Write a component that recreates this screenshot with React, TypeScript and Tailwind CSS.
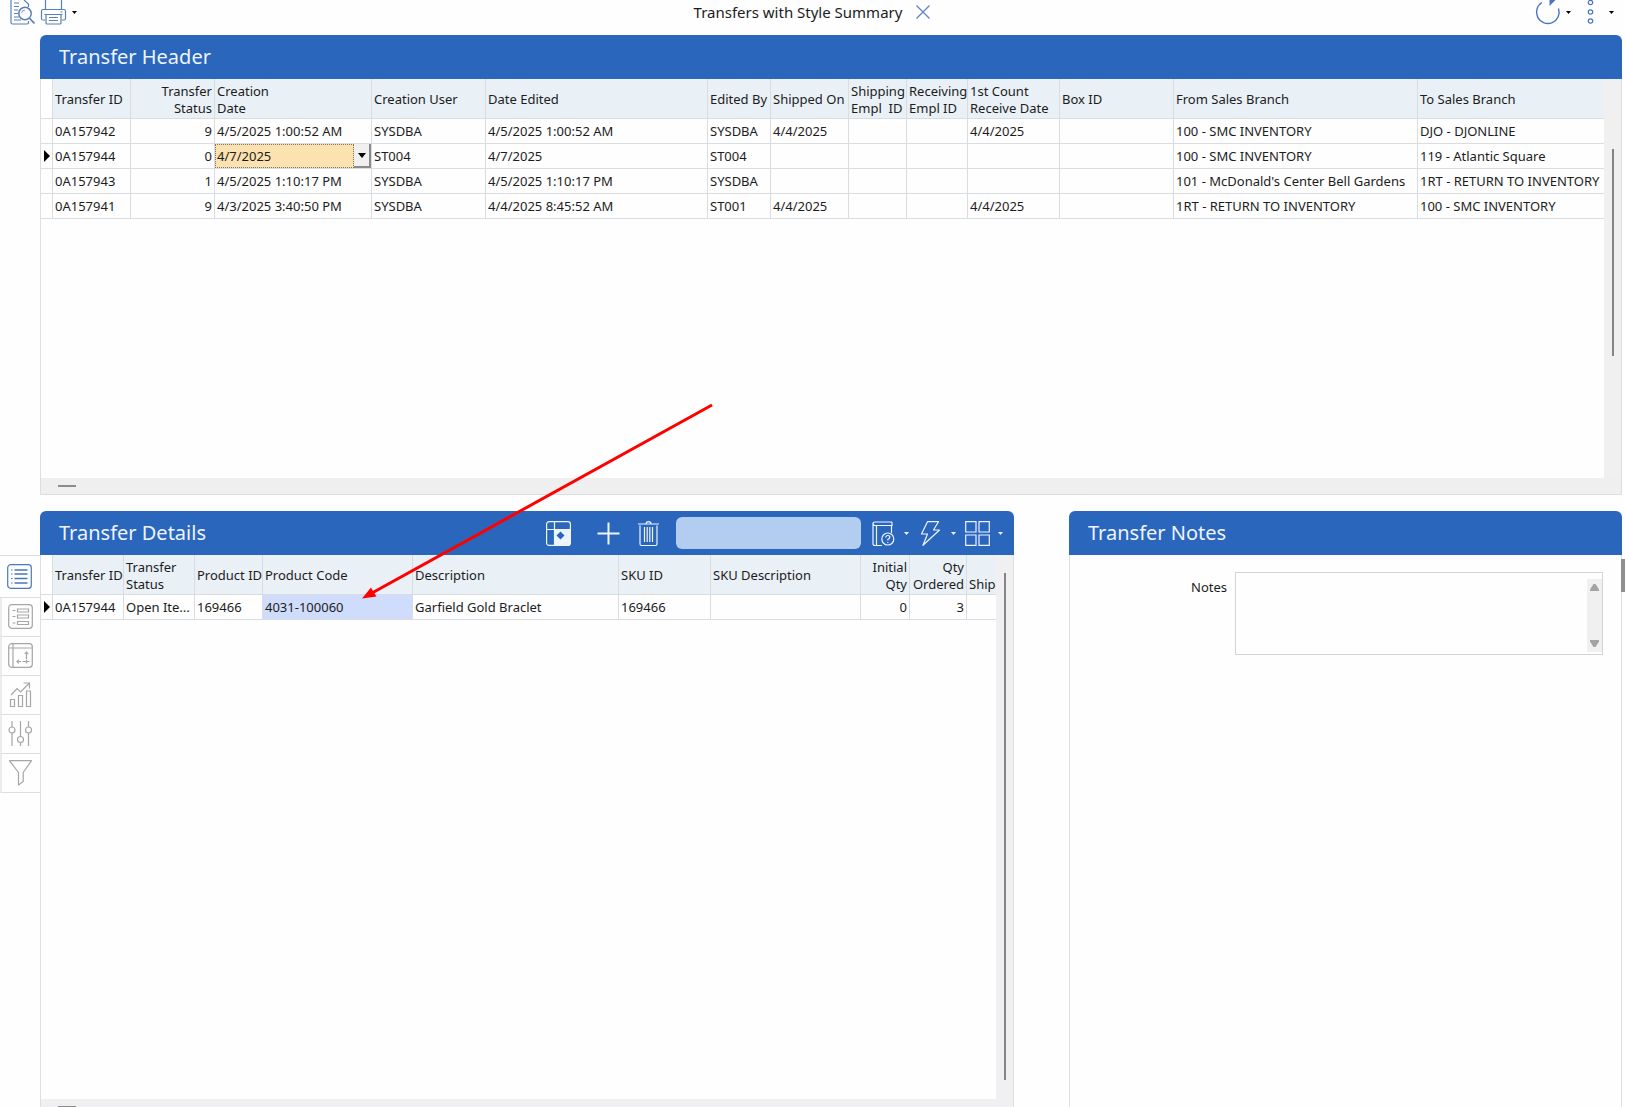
import type { ReactNode } from "react";

interface Column {
  label: ReactNode;
  width?: string;
  right?: boolean;
}

interface TransferRow {
  id: string;
  status: string;
  created: string;
  user: string;
  edited: string;
  editedBy: string;
  shipped: string;
  received: string;
  from: string;
  to: string;
}

const headerColumns: Column[] = [
  { label: "Transfer ID", width: "w-[78px]" },
  { label: <>Transfer<br />Status</>, width: "w-[84px]", right: true },
  { label: <>Creation<br />Date</>, width: "w-[157px]" },
  { label: "Creation User", width: "w-[114px]" },
  { label: "Date Edited", width: "w-[222px]" },
  { label: "Edited By", width: "w-[63px]" },
  { label: "Shipped On", width: "w-[78px]" },
  { label: <>Shipping<br />Empl &nbsp;ID</>, width: "w-[58px]" },
  { label: <>Receiving<br />Empl ID</>, width: "w-[61px]" },
  { label: <>1st Count<br />Receive Date</>, width: "w-[92px]" },
  { label: "Box ID", width: "w-[114px]" },
  { label: "From Sales Branch", width: "w-[244px]" },
  { label: "To Sales Branch" },
];

const detailColumns: Column[] = [
  { label: "Transfer ID", width: "w-[71px]" },
  { label: <>Transfer<br />Status</>, width: "w-[71px]" },
  { label: "Product ID", width: "w-[68px]" },
  { label: "Product Code", width: "w-[150px]" },
  { label: "Description", width: "w-[206px]" },
  { label: "SKU ID", width: "w-[92px]" },
  { label: "SKU Description", width: "w-[150px]" },
  { label: <>Initial<br />Qty</>, width: "w-[49px]", right: true },
  { label: <>Qty<br />Ordered</>, width: "w-[57px]", right: true },
  { label: <><br />Ship</> },
];

const transfers: TransferRow[] = [
  {
    id: "0A157942", status: "9", created: "4/5/2025 1:00:52 AM", user: "SYSDBA", edited: "4/5/2025 1:00:52 AM",
    editedBy: "SYSDBA", shipped: "4/4/2025", received: "4/4/2025", from: "100 - SMC INVENTORY", to: "DJO - DJONLINE",
  },
  {
    id: "0A157944", status: "0", created: "4/7/2025", user: "ST004", edited: "4/7/2025",
    editedBy: "ST004", shipped: "", received: "", from: "100 - SMC INVENTORY", to: "119 - Atlantic Square",
  },
  {
    id: "0A157943", status: "1", created: "4/5/2025 1:10:17 PM", user: "SYSDBA", edited: "4/5/2025 1:10:17 PM",
    editedBy: "SYSDBA", shipped: "", received: "", from: "101 - McDonald's Center Bell Gardens", to: "1RT - RETURN TO INVENTORY",
  },
  {
    id: "0A157941", status: "9", created: "4/3/2025 3:40:50 PM", user: "SYSDBA", edited: "4/4/2025 8:45:52 AM",
    editedBy: "ST001", shipped: "4/4/2025", received: "4/4/2025", from: "1RT - RETURN TO INVENTORY", to: "100 - SMC INVENTORY",
  },
];

const selectedId = "0A157944";

/* ---------- Icons ---------- */

function Icon({ children, className = "" }: { children: ReactNode; className?: string }) {
  return (
    <svg
      viewBox="0 0 25 25"
      className={`h-[25px] w-[25px] shrink-0 overflow-visible ${className}`}
      fill="none"
      stroke="currentColor"
      strokeWidth="1.2"
      aria-hidden="true"
    >
      {children}
    </svg>
  );
}

function Caret({ className = "" }: { className?: string }) {
  return (
    <svg viewBox="0 0 5 3" className={`h-[3px] w-[5px] shrink-0 ${className}`} fill="currentColor" aria-hidden="true">
      <path d="M0 0h5L2.5 3z" />
    </svg>
  );
}

function PreviewIcon() {
  return (
    <Icon>
      <path d="M1 0v22.500q0 1.500 1.500 1.500H17q1.500 0 1.500-1.500V21M14 0l4.500 4V7" />
      <path d="M4 3h5M4 6.500h5M4 10h4M4 13.500h4M4 17h5M4 20h7" />
      <circle cx="15" cy="13.500" r="6.200" strokeWidth="1.500" />
      <path d="M11.500 13q.5-3 3.500-3" strokeWidth=".8" />
      <path d="m19.300 18 5.200 5.500" strokeWidth="1.800" />
    </Icon>
  );
}

function PrinterIcon() {
  return (
    <Icon>
      <path d="M4.500 9.500V0M20.500 9.500V0" />
      <path d="M4 20H2q-1.500 0-1.500-1.500V11q0-1.500 1.500-1.500h21q1.500 0 1.500 1.500v7.500q0 1.500-1.500 1.500h-2" />
      <path d="M3.500 14.500h18M5 14.500V23q0 1 1 1h13q1 0 1-1v-8.500M8 17.500h9M8 20.500h9M19.500 12h2" />
    </Icon>
  );
}

function RefreshIcon() {
  return (
    <Icon>
      <path d="M7 2.500A11.300 11.300 0 1 0 23.500 8.500" strokeWidth="1.400" />
      <path d="M14.500-.5h6.500L14.500 6z" fill="currentColor" stroke="none" />
    </Icon>
  );
}

function DotsIcon() {
  return (
    <Icon>
      <circle cx="12.500" cy="2.500" r="2.200" />
      <circle cx="12.500" cy="12" r="2.200" />
      <circle cx="12.500" cy="21" r="2.200" />
    </Icon>
  );
}

function ListIcon() {
  return (
    <Icon>
      <rect x=".7" y=".7" width="23.600" height="23.600" rx="3" />
      <path d="M7.500 6h13M7.500 10h13M7.500 14.500h13M7.500 19h13" strokeWidth="1.500" />
      <path d="M4 6h1.500M4 10h1.500M4 14.500h1.500M4 19h1.500" />
    </Icon>
  );
}

function FormIcon() {
  return (
    <Icon>
      <rect x=".7" y=".7" width="23.600" height="23.600" rx="3" />
      <path d="M9.500 5h11v3h-11zM9.500 11h11v3h-11zM9.500 17.500h11v3h-11zM4.500 6.500h3M4.500 12.500h3M4.500 19h3" />
    </Icon>
  );
}

function PivotIcon() {
  return (
    <Icon>
      <rect x=".7" y=".7" width="23.600" height="23.600" rx="3" />
      <path d="M1 5h23.500M5 1v23.500" />
      <path d="M18.500 9v7m-1.800-5.200L18.500 9l1.800 1.800M9 18.500h4m-2.200-1.800L9 18.500l1.800 1.800M14.500 18.500h7M18.500 16.500v4" />
    </Icon>
  );
}

function ChartIcon() {
  return (
    <Icon>
      <path d="M2.500 17.500h4v7h-4zM10.500 13.500h4v11h-4zM18.500 9h4v15.500h-4z" />
      <path d="m3 13 6-6.500 3.500 3.500 8.500-8.500M15.500 1h6v5.500" />
    </Icon>
  );
}

function SlidersIcon() {
  return (
    <Icon>
      <path d="M4 0v6M4 12v13M12.500 0v15.500M12.500 21.500V25M20.500 0v6M20.500 12v13" />
      <circle cx="4" cy="9" r="3" />
      <circle cx="12.500" cy="18.500" r="3" />
      <circle cx="20.500" cy="9" r="3" />
    </Icon>
  );
}

function FunnelIcon() {
  return (
    <Icon>
      <path d="M1.500.7h22l-8.300 11.800v9L10.500 25V12.500z" strokeLinejoin="round" />
    </Icon>
  );
}

function LayoutIcon() {
  return (
    <Icon>
      <rect x=".6" y=".6" width="23.800" height="23.800" rx="2.500" />
      <path d="M8.500.6v24M.6 8.500h24" />
      <path d="M8.500 8.500h16V22q0 2.400-2.400 2.400H8.500z" fill="currentColor" stroke="none" />
      <path d="m14.500 10.500 4 4-4 4-4-4z" fill="#2a66bb" stroke="none" />
    </Icon>
  );
}

function PlusIcon() {
  return (
    <Icon>
      <path d="M12.500 1.500v22M1.500 12.500h22" strokeWidth="2" />
    </Icon>
  );
}

function TrashIcon() {
  return (
    <Icon>
      <path d="M2 3h21M10 3q0-2.300 2.500-2.300T15 3M4 4.500V23q0 1.500 1.500 1.500h14Q21 24.500 21 23V4.500" />
      <path d="M8.500 6v15M11.200 6v15M13.800 6v15M16.500 6v15" />
    </Icon>
  );
}

function BookIcon() {
  return (
    <Icon>
      <path d="M21 1H4Q2 1 2 3v19.500Q2 24.500 4 24.500h7M21 1v3.500H4Q2 4.500 2 2.500M20.500 4.500V12M5.500 4.500v20" />
      <circle cx="16.800" cy="18" r="6" />
      <path d="M14.800 16.500q0-2 2-2t2 1.800q0 1.200-2 2.200v1M16.800 21v1" />
    </Icon>
  );
}

function BoltIcon() {
  return (
    <Icon>
      <path d="M9.500.7h11l-5 8.300h6L5 24.300 9.500 13h-6z" strokeLinejoin="round" />
    </Icon>
  );
}

function TilesIcon() {
  return (
    <Icon>
      <path d="M.7.700h10.300V11H.7zM14 .7h10.300V11H14zM.7 14h10.300v10.300H.7zM14 14h10.300v10.300H14z" />
    </Icon>
  );
}

/* ---------- Grid parts ---------- */

function GridHead({ columns }: { columns: Column[] }) {
  return (
    <thead>
      <tr className="h-10">
        <th className="w-3 border-r border-b border-[#d9dce0] bg-white" aria-label="Current row" />
        {columns.map((col, i) => (
          <th
            key={i}
            className={`${col.width ?? ""} ${col.right ? "text-right" : "text-left"} overflow-hidden border-b border-[#d9dce0] bg-[#e9f0f6] px-0.5 pt-0.5 leading-[17px] font-normal whitespace-nowrap ${i < columns.length - 1 ? "border-r" : ""}`}
          >
            {col.label}
          </th>
        ))}
      </tr>
    </thead>
  );
}

function RowMarker({ current }: { current: boolean }) {
  return (
    <td className="border-r border-b border-[#d9dce0]">
      {current && (
        <svg viewBox="0 0 6 12" className="mx-auto h-3 w-1.5" aria-label="Current row">
          <path d="M0 0v12l6-6z" />
        </svg>
      )}
    </td>
  );
}

function Cell({ children, className = "" }: { children?: ReactNode; className?: string }) {
  return (
    <td className={`overflow-hidden border-r border-b border-[#d9dce0] px-0.5 pt-0.5 text-ellipsis whitespace-nowrap last:border-r-0 ${className}`}>
      {children}
    </td>
  );
}

function PanelTitle({ title, children }: { title: string; children?: ReactNode }) {
  return (
    <div className="flex h-11 shrink-0 items-center rounded-t-md bg-[#2a66bb] pr-[11px] pl-[19px] text-[#eef4ff]">
      <h2 className="flex-1 text-xl">{title}</h2>
      {children}
    </div>
  );
}

function ToolButton({ label, caret, children }: { label: string; caret?: boolean; children: ReactNode }) {
  return (
    <button type="button" aria-label={label} className="flex shrink-0 items-center gap-2">
      {children}
      {caret && <Caret />}
    </button>
  );
}

function TopBar() {
  return (
    <header className="grid h-[35px] shrink-0 grid-cols-[1fr_auto_1fr] items-start pr-[11px] pl-2.5">
      <div className="flex items-center gap-[6px] text-[#5b80b4]">
        <ToolButton label="Preview"><PreviewIcon /></ToolButton>
        <button type="button" aria-label="Print" className="flex items-center gap-1.5">
          <PrinterIcon />
          <Caret className="text-black" />
        </button>
      </div>
      <div className="flex items-center gap-3.5">
        <h1 className="text-[15px] leading-6">Transfers with Style Summary</h1>
        <button type="button" aria-label="Close" className="text-[#5f7fc4]">
          <svg viewBox="0 0 14 14" className="h-3.5 w-3.5" fill="none" stroke="currentColor" strokeWidth="1.2" aria-hidden="true">
            <path d="m.5.5 13 13M13.500.5l-13 13" />
          </svg>
        </button>
      </div>
      <div className="flex items-center justify-end gap-[7px] text-[#4a74c0]">
        <button type="button" aria-label="Refresh" className="flex items-center gap-1.5">
          <RefreshIcon />
          <Caret className="text-black" />
        </button>
        <button type="button" aria-label="More" className="flex items-center gap-1.5">
          <DotsIcon />
          <Caret className="text-black" />
        </button>
      </div>
    </header>
  );
}

function TransferHeader() {
  return (
    <section className="flex min-h-0 flex-col">
      <PanelTitle title="Transfer Header" />
      <div className="flex min-h-0 flex-1 border-x border-[#dcdee2]">
        <div className="min-w-0 flex-1">
          <table className="w-full table-fixed border-separate border-spacing-0">
            <GridHead columns={headerColumns} />
            <tbody>
              {transfers.map((row) => (
                <tr key={row.id} className="h-[25px]">
                  <RowMarker current={row.id === selectedId} />
                  <Cell>{row.id}</Cell>
                  <Cell className="text-right">{row.status}</Cell>
                  {row.id === selectedId ? (
                    <td className="border-r border-b border-[#d9dce0] p-0">
                      <div className="flex h-6">
                        <input
                          aria-label="Creation date"
                          defaultValue={row.created}
                          className="min-w-0 flex-1 border border-dotted border-[#7d7460] bg-[#fbe2b0] px-px pt-0.5 outline-none"
                        />
                        <button
                          type="button"
                          aria-label="Open calendar"
                          className="flex w-[17px] items-center justify-center border-r-2 border-b-2 border-[#8a8a8a] bg-[#f0f0f0]"
                        >
                          <svg viewBox="0 0 8 5" className="h-[5px] w-2" aria-hidden="true"><path d="M0 0h8L4 5z" /></svg>
                        </button>
                      </div>
                    </td>
                  ) : (
                    <Cell>{row.created}</Cell>
                  )}
                  <Cell>{row.user}</Cell>
                  <Cell>{row.edited}</Cell>
                  <Cell>{row.editedBy}</Cell>
                  <Cell>{row.shipped}</Cell>
                  <Cell />
                  <Cell />
                  <Cell>{row.received}</Cell>
                  <Cell />
                  <Cell>{row.from}</Cell>
                  <Cell>{row.to}</Cell>
                </tr>
              ))}
            </tbody>
          </table>
        </div>
        <div className="w-[17px] shrink-0 bg-[#f0f0f1] pt-[70px]">
          <div className="mx-auto h-[63%] w-0.5 bg-[#858585]" />
        </div>
      </div>
      <div className="flex h-[17px] shrink-0 items-center border border-t-0 border-[#dcdee2] bg-[#efefef] pl-[17px]">
        <div className="h-0.5 w-[18px] bg-[#8c8c8c]" />
      </div>
    </section>
  );
}

function TransferDetails() {
  return (
    <section className="flex min-h-0 min-w-0 flex-col">
      <PanelTitle title="Transfer Details">
        <div className="flex items-center gap-[25px]">
          <ToolButton label="Layout"><LayoutIcon /></ToolButton>
          <div className="flex items-center gap-[15px]">
            <ToolButton label="Add"><PlusIcon /></ToolButton>
            <ToolButton label="Delete"><TrashIcon /></ToolButton>
            <input aria-label="Search details" className="h-8 w-[185px] rounded-md bg-[#b2cdf0] px-2 text-black outline-none" />
          </div>
        </div>
        <div className="ml-2.5 flex items-center gap-[9px]">
          <ToolButton label="Reference" caret><BookIcon /></ToolButton>
          <ToolButton label="Actions" caret><BoltIcon /></ToolButton>
          <ToolButton label="Views" caret><TilesIcon /></ToolButton>
        </div>
      </PanelTitle>
      <div className="flex min-h-0 flex-1 border-x border-[#dcdee2]">
        <div className="min-w-0 flex-1">
          <table className="w-full table-fixed border-separate border-spacing-0">
            <GridHead columns={detailColumns} />
            <tbody>
              <tr className="h-[25px]">
                <RowMarker current />
                <Cell>0A157944</Cell>
                <Cell>Open Ite...</Cell>
                <Cell>169466</Cell>
                <Cell className="bg-[#d0dcfb]">4031-100060</Cell>
                <Cell>Garfield Gold Braclet</Cell>
                <Cell>169466</Cell>
                <Cell />
                <Cell className="text-right">0</Cell>
                <Cell className="text-right">3</Cell>
                <Cell />
              </tr>
            </tbody>
          </table>
        </div>
        <div className="w-[17px] shrink-0 bg-[#f0f0f2] pt-[18px] pb-[19px]">
          <div className="mx-auto h-full w-0.5 bg-[#858585]" />
        </div>
      </div>
      <div className="flex h-2 shrink-0 items-end border-x border-[#dcdee2] bg-[#f0f0f2] pl-[17px]">
        <div className="h-px w-[18px] bg-[#8c8c8c]" />
      </div>
    </section>
  );
}

function TransferNotes() {
  return (
    <section className="relative flex min-w-0 flex-col">
      <PanelTitle title="Transfer Notes" />
      <div className="flex flex-1 items-start border-x border-[#dcdee2] pt-[17px] pr-[18px]">
        <label htmlFor="notes" className="w-[165px] shrink-0 pt-1.5 pr-2 text-right">Notes</label>
        <div className="flex h-[83px] min-w-0 flex-1 border border-[#d4d4d4]">
          <textarea id="notes" className="min-w-0 flex-1 resize-none overflow-hidden p-1 outline-none" />
          <div className="mt-1.5 mb-0.5 flex w-[15px] flex-col items-center justify-between bg-[#f0f0f0] py-[5px] text-[#a3a3a3]">
            <svg viewBox="0 0 9 7" className="h-[7px] w-[9px]" fill="currentColor" aria-hidden="true"><path d="M3.500 0h2L9 5.500V7H0V5.500z" /></svg>
            <svg viewBox="0 0 9 7" className="h-[7px] w-[9px]" fill="currentColor" aria-hidden="true"><path d="M3.500 7h2L9 1.500V0H0v1.500z" /></svg>
          </div>
        </div>
      </div>
      {/* page scroll thumb */}
      <div className="absolute top-12 -right-1 h-[33px] w-[5px] bg-[#8f8f8f]" />
    </section>
  );
}

function SideTabs() {
  const tabs = [
    { label: "Form", icon: <FormIcon /> },
    { label: "Pivot", icon: <PivotIcon /> },
    { label: "Chart", icon: <ChartIcon /> },
    { label: "Settings", icon: <SlidersIcon /> },
    { label: "Filter", icon: <FunnelIcon /> },
  ];
  return (
    <nav className="flex w-10 shrink-0 flex-col pt-11">
      <button type="button" aria-label="List" className="flex h-[43px] items-center justify-center border-y border-[#dcdee2] pr-0.5 text-[#4a78bd]">
        <ListIcon />
      </button>
      {tabs.map((tab) => (
        <button
          key={tab.label}
          type="button"
          aria-label={tab.label}
          className="flex h-[39px] items-center justify-center border-b border-l-2 border-[#dcdee2] border-l-[#ececee] pr-0.5 pb-0.5 text-[#a6a6a6]"
        >
          {tab.icon}
        </button>
      ))}
    </nav>
  );
}

export default function App() {
  return (
    <div className="relative flex h-screen flex-col overflow-hidden bg-[#fefefe] font-['Noto_Sans','Open_Sans',sans-serif] text-[13px] text-[#1c1c1c]">
      <TopBar />
      <main className="grid min-h-0 flex-1 grid-rows-[460fr_596fr] gap-4 pr-[3px]">
        <div className="grid min-h-0 pl-10">
          <TransferHeader />
        </div>
        <div className="flex min-h-0">
          <SideTabs />
          <div className="grid min-w-0 flex-1 grid-cols-[974fr_553fr] gap-[55px]">
            <TransferDetails />
            <TransferNotes />
          </div>
        </div>
      </main>

      {/* Callout arrow over the grids */}
      <svg className="pointer-events-none absolute top-0 left-0 h-full w-full" aria-hidden="true">
        <path d="M712 405 372 593" stroke="#ff0000" strokeWidth="3" />
        <path d="m362 598.500 9-11 2.500 4.500 3 4.500z" fill="#ff0000" />
      </svg>
    </div>
  );
}
